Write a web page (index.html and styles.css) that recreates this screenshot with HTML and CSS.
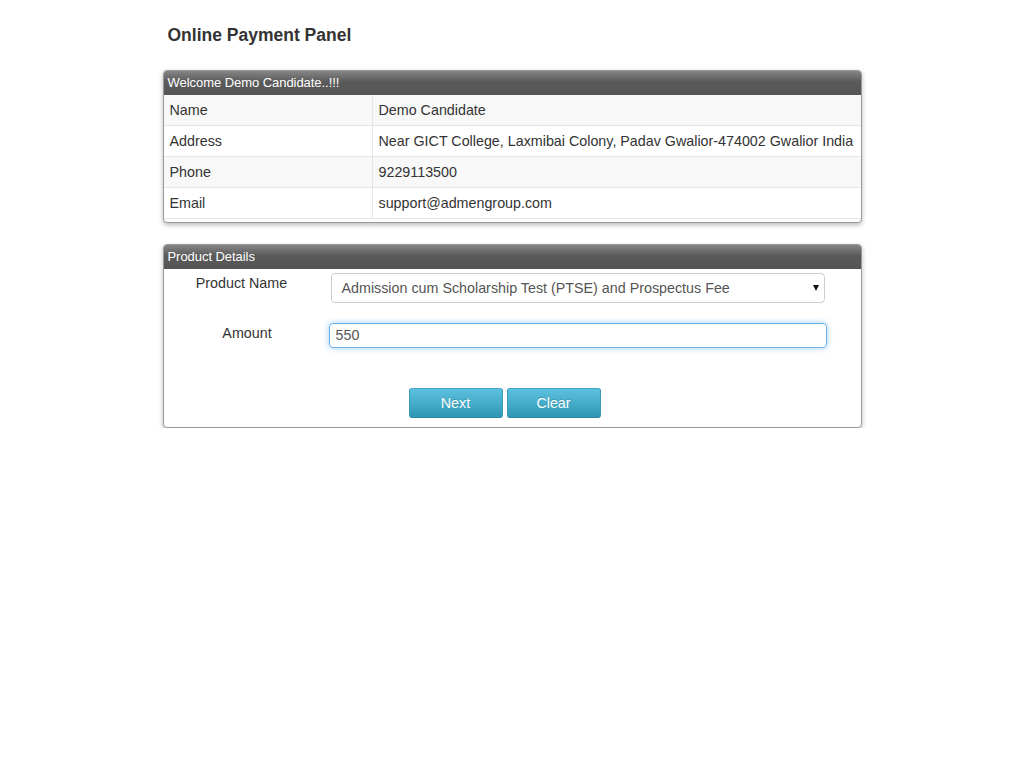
FILE: index.html
```html
<!DOCTYPE html>
<html>
<head>
<meta charset="utf-8">
<link rel="stylesheet" href="styles.css">
</head>
<body>
<div class="page">
  <h1 class="title">Online Payment Panel</h1>

  <div class="panel">
    <div class="panel-head">Welcome Demo Candidate..!!!</div>
    <table class="info">
      <tr class="odd"><td class="k">Name</td><td>Demo Candidate</td></tr>
      <tr><td class="k">Address</td><td>Near GICT College, Laxmibai Colony, Padav Gwalior-474002 Gwalior India</td></tr>
      <tr class="odd"><td class="k">Phone</td><td>9229113500</td></tr>
      <tr><td class="k">Email</td><td>support@admengroup.com</td></tr>
    </table>
  </div>

  <div class="panel panel2">
    <div class="panel-head">Product Details</div>
    <div class="form">
      <div class="row row-product">
        <div class="label">Product Name</div>
        <div class="select-wrap">
          <div class="select">Admission cum Scholarship Test (PTSE) and Prospectus Fee</div>
        </div>
      </div>
      <div class="row row-amount">
        <div class="label label-amount">Amount</div>
        <div class="input">550</div>
      </div>
      <div class="buttons">
        <button class="btn">Next</button>
        <button class="btn">Clear</button>
      </div>
    </div>
  </div>
</div>
</body>
</html>
```
FILE: styles.css
```css
html, body {
  margin: 0;
  padding: 0;
  background: #fff;
}
body {
  font-family: "Liberation Sans", Arial, sans-serif;
  color: #333;
  font-size: 14.3px;
}
.page {
  width: 699px;
  margin: 0 auto;
  padding-top: 24px;
}
.title {
  margin: 0 0 24px 5px;
  font-size: 17.5px;
  line-height: 22px;
  font-weight: bold;
  color: #333;
}
.panel {
  border: 1px solid #9a9a9a;
  border-radius: 4px;
  box-shadow: 0 2px 5px rgba(0,0,0,0.28);
  background: #fff;
  overflow: hidden;
  padding-bottom: 3px;
}
.panel2 {
  margin-top: 21px;
  padding-bottom: 9px;
}
.panel-head {
  height: 24px;
  line-height: 23px;
  padding-left: 4px;
  color: #fff;
  font-size: 13px;
  letter-spacing: -0.05px;
  background: linear-gradient(#858585, #5a5a5a 45%, #555 100%);
}
.info {
  width: 100%;
  border-collapse: collapse;
}
.info td {
  padding: 6px 6px 6px;
  line-height: 18px;
  border-bottom: 1px solid #e6e6e6;
  vertical-align: top;
  font-size: 14.3px;
  color: #333;
}
.info td.k {
  width: 196px;
  border-right: 1px solid #e6e6e6;
}
.info tr.odd td {
  background: #f8f8f8;
}
.form {
  padding-top: 4px;
}
.row {
  display: flex;
  align-items: flex-start;
}
.row-amount {
  margin-top: 20px;
}
.label {
  width: 156px;
  text-align: center;
  line-height: 20px;
  font-size: 14.3px;
  color: #333;
}
.label-amount {
  width: 145px;
  padding-left: 11px;
  padding-right: 0;
}
.select-wrap {
  position: relative;
  margin-left: 11px;
}
.select {
  width: 482px;
  height: 28px;
  line-height: 28px;
  padding-left: 10px;
  border: 1px solid #ccc;
  border-radius: 4px;
  color: #555;
  font-size: 14.3px;
  background: #fff;
}
.select-wrap::after {
  content: "";
  position: absolute;
  right: 6px;
  top: 12px;
  border-left: 3px solid transparent;
  border-right: 3px solid transparent;
  border-top: 6px solid #111;
}
.input {
  margin-left: 9px;
  width: 490px;
  height: 23px;
  line-height: 23px;
  padding-left: 6px;
  border: 1px solid #66afe9;
  border-radius: 4px;
  box-shadow: 0 0 6px rgba(102,175,233,0.6);
  color: #555;
  font-size: 14.3px;
}
.buttons {
  display: flex;
  gap: 4px;
  margin-top: 40px;
  padding-left: 245px;
}
.btn {
  width: 94px;
  height: 30px;
  border: 1px solid #2f8aa8;
  border-color: #46a8c6 #3a9ab8 #2d86a3;
  border-radius: 3px;
  background: linear-gradient(#5bc1de, #2f96b4);
  color: #fff;
  font-family: "Liberation Sans", Arial, sans-serif;
  font-size: 14.3px;
  padding: 0;
  text-shadow: 0 -1px 0 rgba(0,0,0,0.15);
}
```
